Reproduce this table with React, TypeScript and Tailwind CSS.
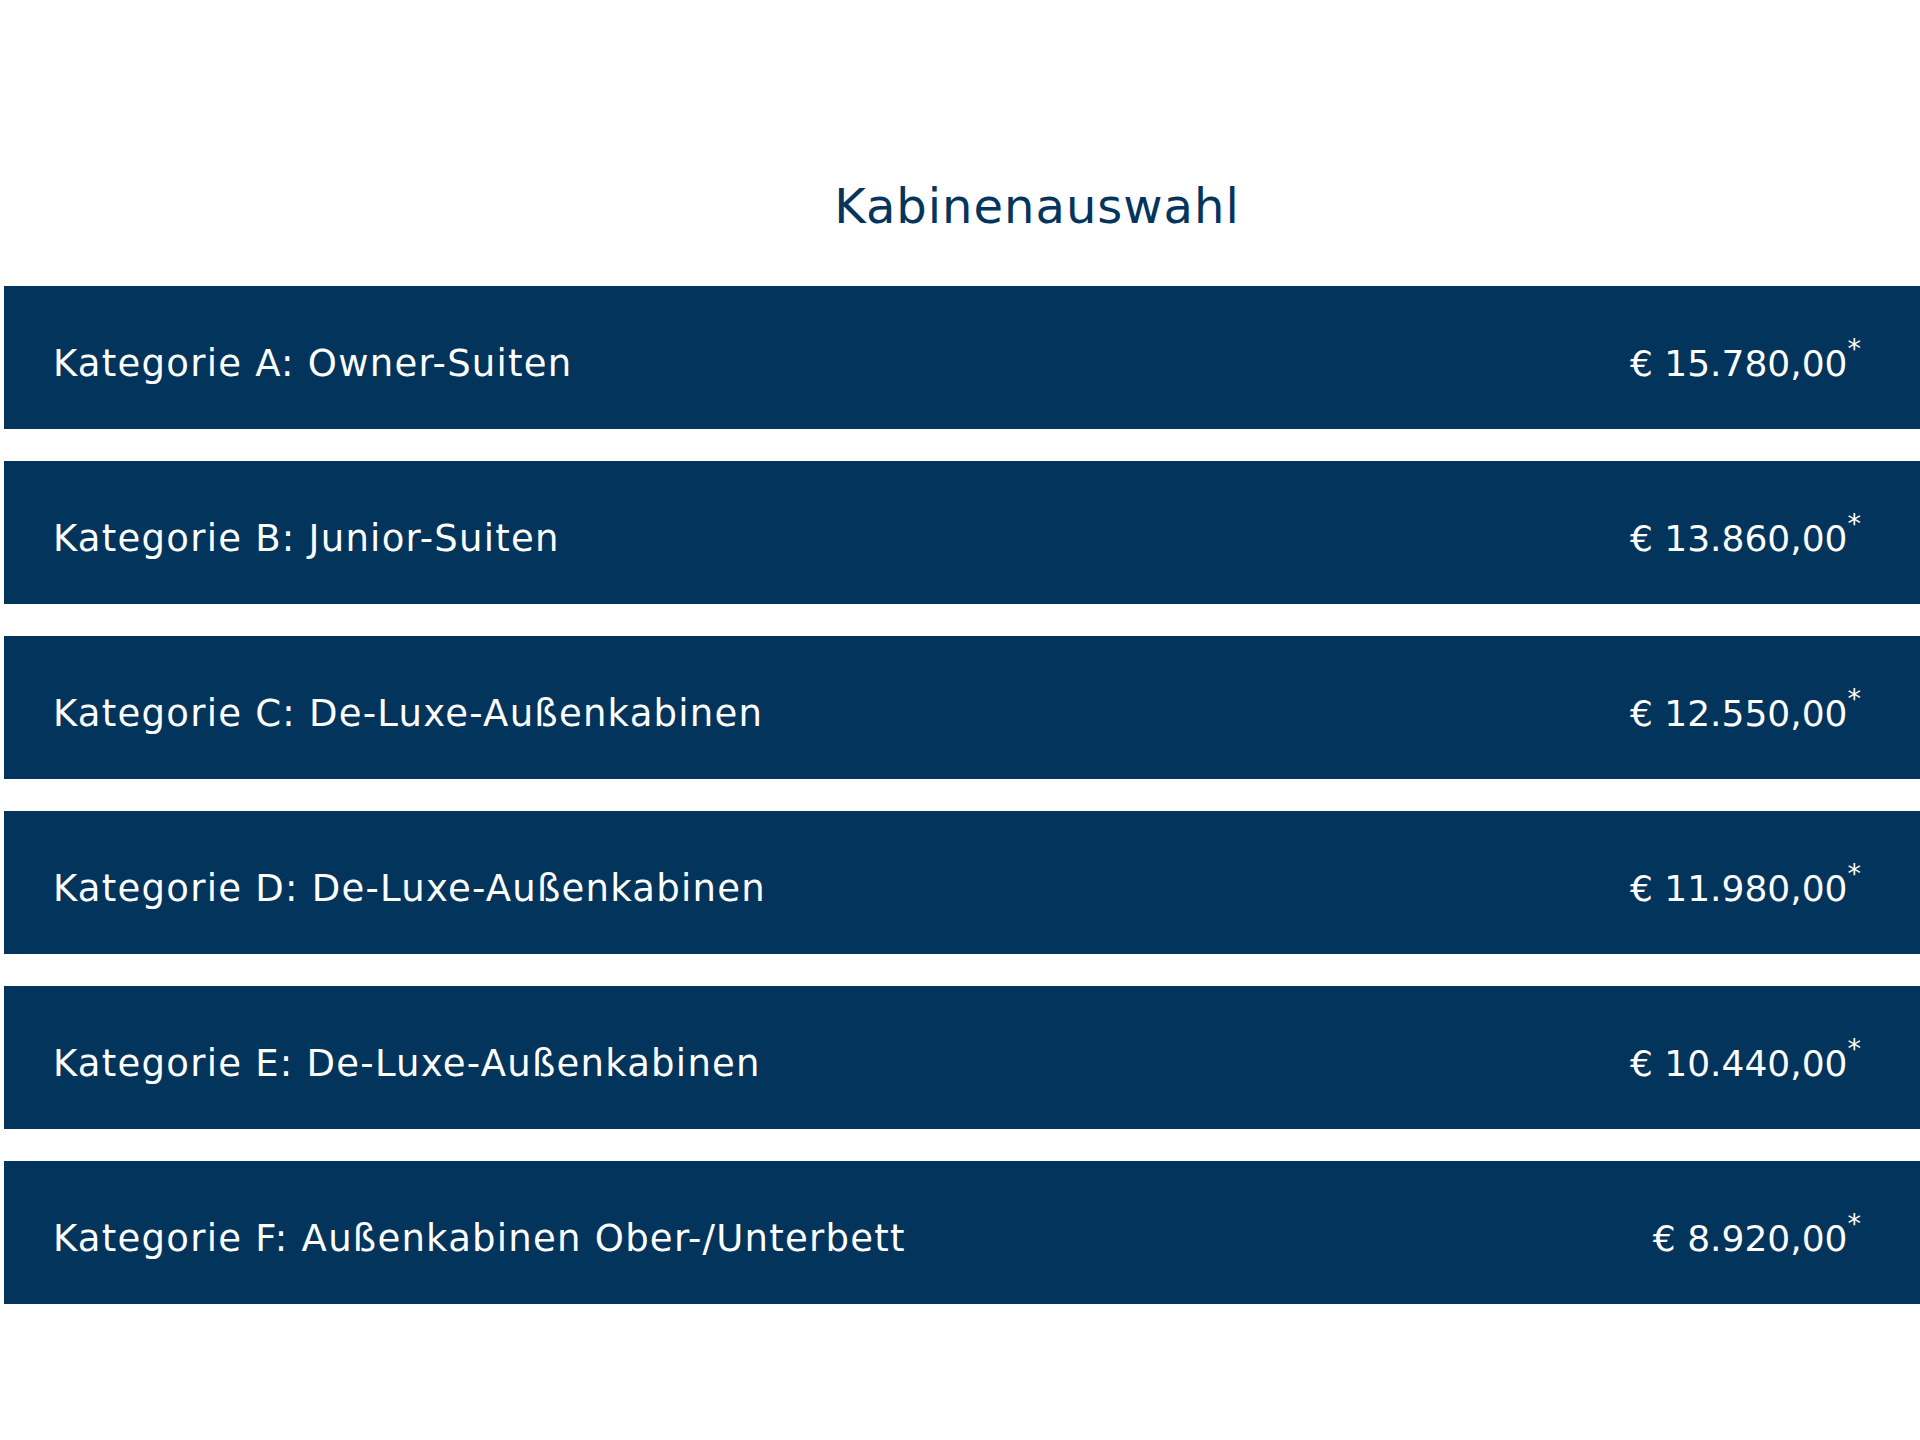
import React from 'react';

interface Cabin {
  label: string;
  price: string;
}

const cabins: Cabin[] = [
  { label: 'Kategorie A: Owner-Suiten', price: '€ 15.780,00' },
  { label: 'Kategorie B: Junior-Suiten', price: '€ 13.860,00' },
  { label: 'Kategorie C: De-Luxe-Außenkabinen', price: '€ 12.550,00' },
  { label: 'Kategorie D: De-Luxe-Außenkabinen', price: '€ 11.980,00' },
  { label: 'Kategorie E: De-Luxe-Außenkabinen', price: '€ 10.440,00' },
  { label: 'Kategorie F: Außenkabinen Ober-/Unterbett', price: '€ 8.920,00' },
];

const App: React.FC = () => {
  return (
    <div className="min-h-[1440px] bg-white font-['DejaVu_Sans',sans-serif] pl-1 pt-[176px]">
      {/* Title */}
      <h1 className="pl-[150px] text-center text-[48px] leading-[60px] font-normal tracking-[1px] text-[#03355d]">
        Kabinenauswahl
      </h1>

      {/* Cabin rows */}
      <div className="mt-[50px] flex flex-col gap-8">
        {cabins.map((c) => (
          <div
            key={c.label}
            className="flex h-[143px] items-center justify-between bg-[#03345c] pl-[49px] pr-[59px] pt-3 text-white"
          >
            <span className="text-[37px] leading-none tracking-[1.25px]">{c.label}</span>
            <span className="flex items-start text-[36px] leading-none">
              {c.price}
              <span className="-mt-[11px] text-[27px] leading-none">*</span>
            </span>
          </div>
        ))}
      </div>
    </div>
  );
};

export default App;
